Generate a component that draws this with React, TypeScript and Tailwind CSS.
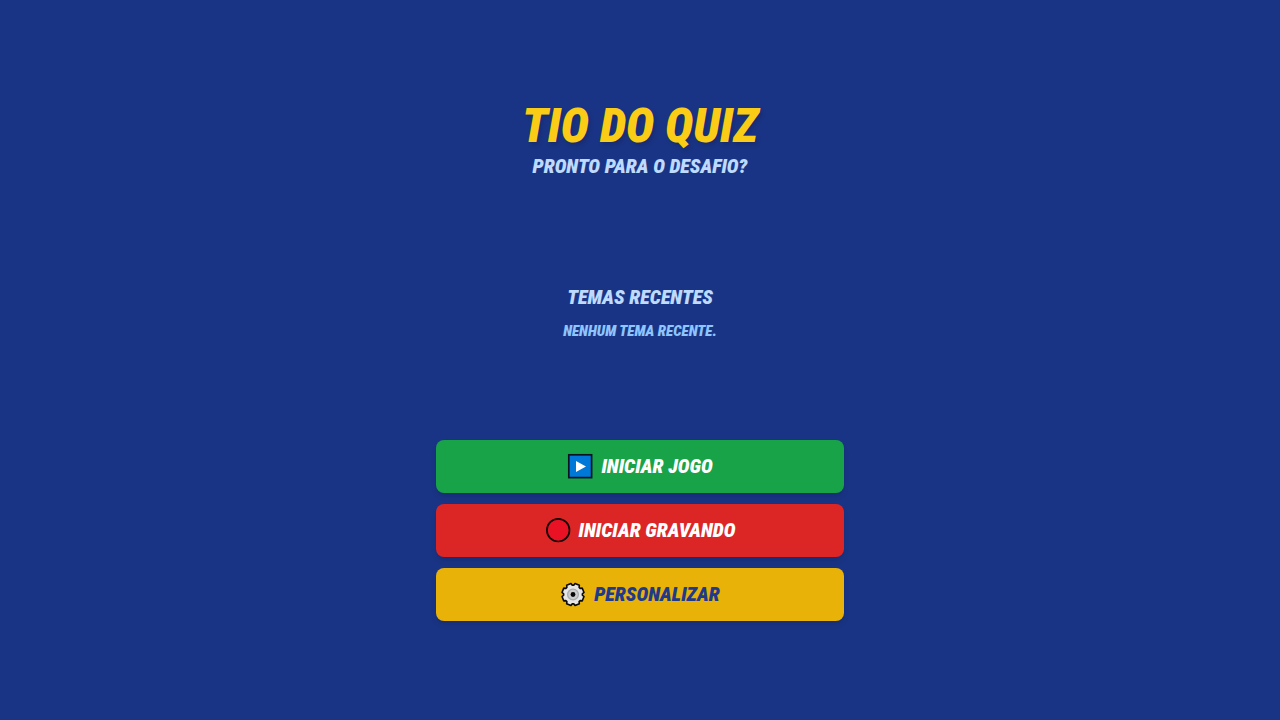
import type { ReactNode } from 'react';

function PlayIcon() {
  return (
    <svg aria-hidden="true" viewBox="0 0 26 26" className="size-[26px]">
      <rect x="1.8" y="1.8" width="22.8" height="22.8" fill="#0078d7" stroke="#08131f" strokeWidth="1.7" />
      <path d="M9 8v11l10-5.5z" fill="#fff" />
    </svg>
  );
}

function RecordIcon() {
  return (
    <svg aria-hidden="true" viewBox="0 0 26 26" className="size-[26px]">
      <circle cx="13.2" cy="13.2" r="11.3" fill="#e81224" stroke="#100507" strokeWidth="1.7" />
    </svg>
  );
}

const toothAngles = [22.5, 67.5, 112.5, 157.5, 202.5, 247.5, 292.5, 337.5];

const gearOutline = toothAngles
  .flatMap((angle) => [
    [angle - 18, 9.4],
    [angle - 12, 11.2],
    [angle + 12, 11.2],
    [angle + 18, 9.4],
  ])
  .map(([angle, radius]) => {
    const radians = (angle * Math.PI) / 180;
    return `${(13 + radius * Math.cos(radians)).toFixed(2)},${(13.5 + radius * Math.sin(radians)).toFixed(2)}`;
  })
  .join(' ');

function GearIcon() {
  return (
    <svg aria-hidden="true" viewBox="0 0 26 26" className="size-[26px]">
      <polygon points={gearOutline} fill="#e6e6e6" stroke="#0b0b0b" strokeWidth="1.6" strokeLinejoin="round" />
      <circle cx="13" cy="13.5" r="5.4" fill="#cccccc" stroke="#a9adb0" strokeWidth="1.3" />
      <circle cx="13" cy="13.5" r="2.4" fill="#050505" />
    </svg>
  );
}

function MenuButton({ tone, icon, children }: { tone: string; icon: ReactNode; children: ReactNode }) {
  return (
    <button
      type="button"
      className={`flex h-[53px] w-full items-center justify-center gap-2 rounded-lg text-xl font-black uppercase italic shadow-md ${tone}`}
    >
      {icon}
      <span>{children}</span>
    </button>
  );
}

export default function App() {
  return (
    <div className="flex min-h-screen items-center justify-center bg-[#1a3485] font-['Roboto_Condensed','Liberation_Sans_Narrow','Liberation_Sans',sans-serif]">
      <main className="flex w-full max-w-md flex-col px-5 py-6 text-center">
        <header>
          <h1 className="text-5xl leading-[52px] font-black text-[#facc15] uppercase italic [text-shadow:2px_3px_4px_rgba(0,0,0,0.15)]">
            Tio do Quiz
          </h1>
          <p className="text-xl leading-7 font-black text-blue-200 uppercase italic">Pronto para o desafio?</p>
        </header>
        <section className="pt-[99px] pb-[93px]">
          <h2 className="text-xl leading-9 font-black text-blue-200 uppercase italic">Temas recentes</h2>
          <p className="text-[15px] leading-8 font-black text-blue-300 uppercase italic">Nenhum tema recente.</p>
        </section>
        <nav aria-label="Menu" className="flex flex-col gap-[11px]">
          <MenuButton tone="bg-[#18a349] text-white" icon={<PlayIcon />}>Iniciar jogo</MenuButton>
          <MenuButton tone="bg-[#dc2626] text-white" icon={<RecordIcon />}>Iniciar gravando</MenuButton>
          <MenuButton tone="bg-[#e8b209] text-[#1e3a8a]" icon={<GearIcon />}>Personalizar</MenuButton>
        </nav>
      </main>
    </div>
  );
}
